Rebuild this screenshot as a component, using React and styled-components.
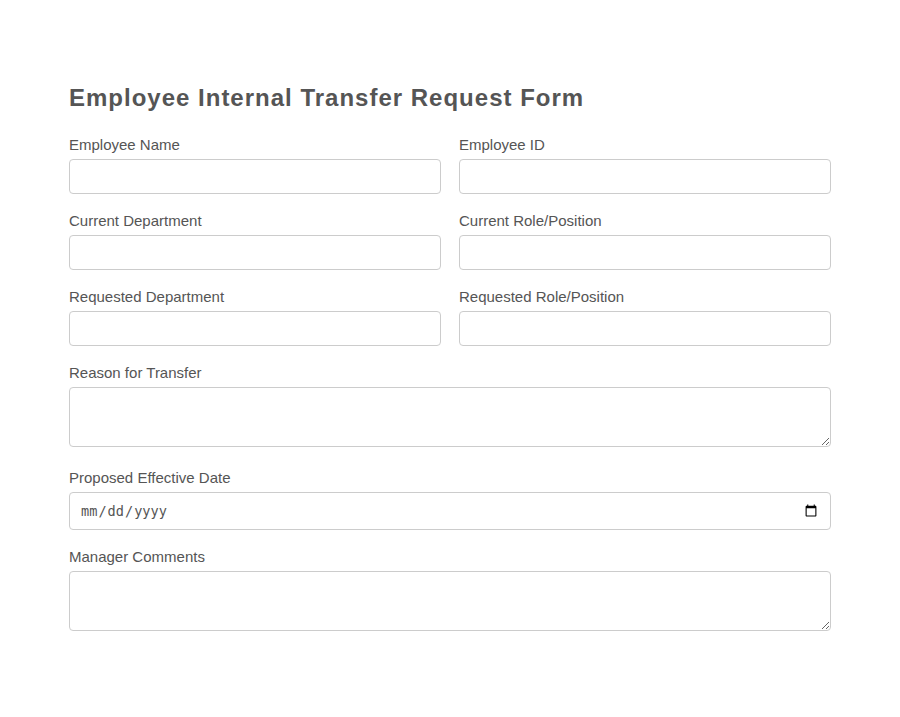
import React from 'react';
import styled, { createGlobalStyle } from 'styled-components';

const GlobalStyle = createGlobalStyle`
  html, body {
    margin: 0;
    background: #fff;
  }
  * {
    box-sizing: border-box;
  }
`;

const Page = styled.div`
  padding: 84px 69px 86px;
  font-family: 'Liberation Sans', Arial, sans-serif;
  color: #555;
`;

const Title = styled.h1`
  margin: 0 0 25px;
  font-size: 24px;
  line-height: 28px;
  font-weight: 700;
  letter-spacing: 1px;
`;

const Form = styled.form`
  display: grid;
  grid-template-columns: 1fr 1fr;
  column-gap: 18px;
  row-gap: 19px;
`;

const Field = styled.div`
  display: flex;
  flex-direction: column;
  grid-column: ${props => (props.$wide ? '1 / -1' : 'auto')};
`;

const Label = styled.label`
  font-size: 15px;
  line-height: 15px;
  margin-bottom: 7px;
`;

const Input = styled.input`
  display: block;
  width: 100%;
  height: ${props => (props.type === 'date' ? '38px' : '35px')};
  padding: 8px 10px;
  border: 1px solid #ccc;
  border-radius: 4px;
  background: #fff;
  color: #555;
  font-size: 13.6px;
  outline: none;
`;

const TextArea = styled.textarea`
  display: block;
  width: 100%;
  height: 60px;
  margin-bottom: 4px;
  padding: 8px 10px;
  border: 1px solid #ccc;
  border-radius: 4px;
  background: #fff;
  color: #555;
  font-size: 13.6px;
  outline: none;
`;

const App = () => {
  return (
    <Page>
      <GlobalStyle />
      <Title>Employee Internal Transfer Request Form</Title>
      <Form>
        <Field>
          <Label>Employee Name</Label>
          <Input type='text' />
        </Field>
        <Field>
          <Label>Employee ID</Label>
          <Input type='text' />
        </Field>
        <Field>
          <Label>Current Department</Label>
          <Input type='text' />
        </Field>
        <Field>
          <Label>Current Role/Position</Label>
          <Input type='text' />
        </Field>
        <Field>
          <Label>Requested Department</Label>
          <Input type='text' />
        </Field>
        <Field>
          <Label>Requested Role/Position</Label>
          <Input type='text' />
        </Field>
        <Field $wide>
          <Label>Reason for Transfer</Label>
          <TextArea />
        </Field>
        <Field $wide>
          <Label>Proposed Effective Date</Label>
          <Input type='date' />
        </Field>
        <Field $wide>
          <Label>Manager Comments</Label>
          <TextArea />
        </Field>
      </Form>
    </Page>
  );
};

export default App;
